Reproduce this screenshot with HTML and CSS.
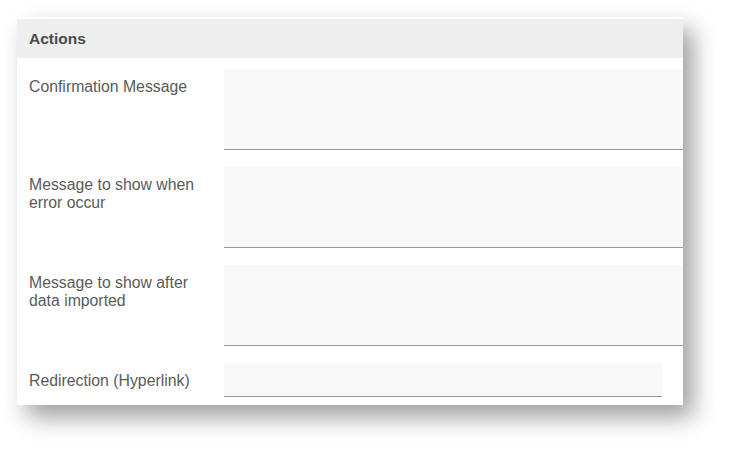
FILE: index.html
```html
<!DOCTYPE html>
<html>
<head>
<meta charset="utf-8">
<link rel="stylesheet" href="styles.css">
</head>
<body>
<div class="card">
  <div class="header">Actions</div>
  <div class="rows">
    <div class="row">
      <div class="label">Confirmation Message</div>
      <div class="field area"></div>
    </div>
    <div class="row">
      <div class="label">Message to show when<br>error occur</div>
      <div class="field area"></div>
    </div>
    <div class="row">
      <div class="label">Message to show after<br>data imported</div>
      <div class="field area"></div>
    </div>
    <div class="row">
      <div class="label label-single">Redirection (Hyperlink)</div>
      <div class="field input"></div>
    </div>
  </div>
</div>
</body>
</html>
```
FILE: styles.css
```css
html, body {
  margin: 0;
  padding: 0;
  background: #ffffff;
}
body {
  width: 731px;
  height: 453px;
  overflow: hidden;
  font-family: "Liberation Sans", Arial, sans-serif;
}
.card {
  margin: 17px 0 0 17px;
  width: 666px;
  height: 388px;
  box-sizing: border-box;
  padding-top: 2px;
  background: #ffffff;
  box-shadow: 10px 12px 22px rgba(0, 0, 0, 0.38);
  overflow: hidden;
}
.header {
  height: 39px;
  background: #eeeeee;
  color: #4a4a4a;
  font-weight: bold;
  font-size: 15.5px;
  line-height: 39px;
  padding-left: 12px;
}
.rows {
  display: flex;
  flex-direction: column;
  gap: 17px;
  padding-top: 11px;
}
.row {
  display: flex;
}
.label {
  width: 195px;
  padding-left: 12px;
  padding-top: 9px;
  font-size: 15.8px;
  line-height: 18px;
  color: #5a5a5a;
}
.label-single {
  padding-top: 9px;
}
.field {
  background: #f8f8f8;
  border-bottom: 1px solid #999999;
}
.area {
  width: 459px;
  height: 80px;
}
.input {
  width: 438px;
  height: 33px;
}
```
